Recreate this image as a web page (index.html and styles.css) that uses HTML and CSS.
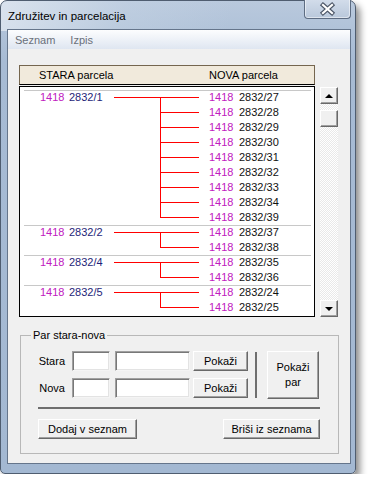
FILE: index.html
```html
<!doctype html>
<html lang="sl">
  <head>
    <meta charset="UTF-8" />
    <title>Združitev in parcelacija</title>
    <link rel="stylesheet" href="styles.css">
  </head>
  <body>
    <div class="window">
      <div class="titlebar">
        <span class="title">Združitev in parcelacija</span>
        <div class="close">
          <svg width="45" height="18" viewBox="0 0 45 18">
            <path d="M18 5 L27 13 M27 5 L18 13" stroke="#4b5566" stroke-width="4.4" stroke-linecap="square" />
            <path d="M18 5 L27 13 M27 5 L18 13" stroke="#ffffff" stroke-width="2.2" stroke-linecap="square" />
          </svg>
        </div>
      </div>

      <div class="client">
        <div class="menubar">
          <span>Seznam</span>
          <span>Izpis</span>
        </div>

        <div class="content">
          <div class="listarea">
            <div class="listcol">
              <div class="listhead">
                <span class="h-old">STARA parcela</span>
                <span>NOVA parcela</span>
              </div>
              <div class="list">
                <div class="group">
                  <div class="row"><div class="old"><span class="lot">1418</span><span class="parc">2832/1</span></div><div class="link first"></div><div class="new"><span class="lot">1418</span><span class="parc">2832/27</span></div></div>
                  <div class="row"><div class="old"></div><div class="link mid"></div><div class="new"><span class="lot">1418</span><span class="parc">2832/28</span></div></div>
                  <div class="row"><div class="old"></div><div class="link mid"></div><div class="new"><span class="lot">1418</span><span class="parc">2832/29</span></div></div>
                  <div class="row"><div class="old"></div><div class="link mid"></div><div class="new"><span class="lot">1418</span><span class="parc">2832/30</span></div></div>
                  <div class="row"><div class="old"></div><div class="link mid"></div><div class="new"><span class="lot">1418</span><span class="parc">2832/31</span></div></div>
                  <div class="row"><div class="old"></div><div class="link mid"></div><div class="new"><span class="lot">1418</span><span class="parc">2832/32</span></div></div>
                  <div class="row"><div class="old"></div><div class="link mid"></div><div class="new"><span class="lot">1418</span><span class="parc">2832/33</span></div></div>
                  <div class="row"><div class="old"></div><div class="link mid"></div><div class="new"><span class="lot">1418</span><span class="parc">2832/34</span></div></div>
                  <div class="row"><div class="old"></div><div class="link last"></div><div class="new"><span class="lot">1418</span><span class="parc">2832/39</span></div></div>
                </div>
                <div class="group">
                  <div class="row"><div class="old"><span class="lot">1418</span><span class="parc">2832/2</span></div><div class="link first"></div><div class="new"><span class="lot">1418</span><span class="parc">2832/37</span></div></div>
                  <div class="row"><div class="old"></div><div class="link last"></div><div class="new"><span class="lot">1418</span><span class="parc">2832/38</span></div></div>
                </div>
                <div class="group">
                  <div class="row"><div class="old"><span class="lot">1418</span><span class="parc">2832/4</span></div><div class="link first"></div><div class="new"><span class="lot">1418</span><span class="parc">2832/35</span></div></div>
                  <div class="row"><div class="old"></div><div class="link last"></div><div class="new"><span class="lot">1418</span><span class="parc">2832/36</span></div></div>
                </div>
                <div class="group">
                  <div class="row"><div class="old"><span class="lot">1418</span><span class="parc">2832/5</span></div><div class="link first"></div><div class="new"><span class="lot">1418</span><span class="parc">2832/24</span></div></div>
                  <div class="row"><div class="old"></div><div class="link last"></div><div class="new"><span class="lot">1418</span><span class="parc">2832/25</span></div></div>
                </div>
              </div>
            </div>

            <div class="scrollbar">
              <div class="sbtn"><span class="arrow-up"></span></div>
              <div class="track short"></div>
              <div class="sbtn thumb"></div>
              <div class="track"></div>
              <div class="sbtn"><span class="arrow-down"></span></div>
            </div>
          </div>

          <fieldset class="pair">
            <legend>Par stara-nova</legend>
            <div class="pair-top">
              <div class="fields">
                <div class="frow">
                  <label>Stara</label>
                  <div class="inp"></div>
                  <div class="inp wide"></div>
                  <button class="btn show">Pokaži</button>
                </div>
                <div class="frow">
                  <label>Nova</label>
                  <div class="inp"></div>
                  <div class="inp wide"></div>
                  <button class="btn show">Pokaži</button>
                </div>
              </div>
              <div class="vsep"></div>
              <button class="btn tall">Pokaži<br>par</button>
            </div>
            <div class="hr"></div>
            <div class="pair-bottom">
              <button class="btn add">Dodaj v seznam</button>
              <button class="btn del">Briši iz seznama</button>
            </div>
          </fieldset>
        </div>
      </div>
    </div>
  </body>
</html>
```

FILE: styles.css
```css
body {
  margin: 0;
  background: #fff;
  font-family: "Liberation Sans", Arial, sans-serif;
  color: #000;
}
.window {
  width: 356px;
  height: 474px;
  box-sizing: border-box;
  border: 1px solid #4f5d70;
  border-radius: 7px 7px 5px 5px;
  padding: 0 4px 9px 6px;
  background:
    linear-gradient(100deg, rgba(226, 233, 242, 0.8) 0%, rgba(200, 214, 230, 0.4) 35%, rgba(169, 188, 212, 0) 65%) 0 0 / 100% 30px no-repeat,
    linear-gradient(#b9c9dd, #a7bbd4 60px, #a3b8d2);
  box-shadow: 4px 5px 7px rgba(0, 0, 0, 0.45);
  display: flex;
  flex-direction: column;
}
.titlebar {
  height: 28px;
  display: flex;
  justify-content: space-between;
  align-items: flex-start;
}
.title {
  margin: 8px 0 0 1px;
  font-size: 11.5px;
  line-height: 14px;
}
.close {
  width: 47px;
  height: 19px;
  margin-top: -1px;
  box-sizing: border-box;
  border: 1px solid #5d6c82;
  border-top: none;
  border-radius: 0 0 4px 4px;
  background: linear-gradient(#d2dcea, #b9c8db);
  box-shadow: inset 1px 0 rgba(255, 255, 255, 0.5), inset -1px -1px rgba(255, 255, 255, 0.5);
  display: flex;
}
.client {
  flex: 1;
  border: 1px solid #65758b;
  background: #f0f0f0;
  display: flex;
  flex-direction: column;
}
.menubar {
  height: 19px;
  background: linear-gradient(#fcfdfe, #dfe6f1);
  display: flex;
  align-items: center;
  gap: 15px;
  padding-left: 7px;
  font-size: 11px;
  color: #6a707a;
}
.content {
  padding: 16px 0 0 11px;
}
.listarea {
  display: flex;
  gap: 5px;
}
.listcol {
  width: 296px;
}
.listhead {
  height: 20px;
  box-sizing: border-box;
  border: 1px solid #75664f;
  border-bottom-color: #000;
  background: #f1eadc;
  display: flex;
  align-items: center;
  padding-left: 19px;
  font-size: 11px;
}
.h-old {
  width: 170px;
}
.list {
  height: 231px;
  margin-top: 1px;
  box-sizing: border-box;
  border: 1px solid #000;
  background: #fff;
  padding: 3px 3px 0 4px;
  overflow: hidden;
  font-size: 11px;
}
.group {
  box-shadow: inset 0 1px #c8c8c8;
}
.row {
  display: flex;
  height: 15px;
  line-height: 15px;
}
.old {
  width: 74px;
  padding-left: 16px;
  display: flex;
}
.new {
  padding-left: 10px;
  display: flex;
}
.lot {
  color: #c020c0;
  width: 29px;
}
.new .lot {
  width: 30px;
}
.old .parc {
  color: #1e1e78;
}
.new .parc {
  color: #111;
}
.link {
  width: 85px;
}
.link.first {
  background:
    linear-gradient(#f00, #f00) 0 7px / 100% 1px no-repeat,
    linear-gradient(#f00, #f00) 46px 7px / 1px 8px no-repeat;
}
.link.mid {
  background:
    linear-gradient(#f00, #f00) 46px 7px / 39px 1px no-repeat,
    linear-gradient(#f00, #f00) 46px 0 / 1px 100% no-repeat;
}
.link.last {
  background:
    linear-gradient(#f00, #f00) 46px 7px / 39px 1px no-repeat,
    linear-gradient(#f00, #f00) 46px 0 / 1px 8px no-repeat;
}
.scrollbar {
  width: 18px;
  height: 230px;
  margin-top: 22px;
  display: flex;
  flex-direction: column;
  background: repeating-conic-gradient(#fff 0 25%, #e9e9e9 0 50%) 0 0 / 2px 2px;
}
.track {
  flex: 1;
}
.track.short {
  flex: 0 0 6px;
}
.sbtn {
  height: 17px;
  box-sizing: border-box;
  background: #f0f0f0;
  border: 1px solid;
  border-color: #fff #696969 #696969 #fff;
  box-shadow: inset -1px -1px #a0a0a0;
  display: flex;
  align-items: center;
  justify-content: center;
}
.arrow-up {
  border-left: 4px solid transparent;
  border-right: 4px solid transparent;
  border-bottom: 4px solid #000;
}
.arrow-down {
  border-left: 4px solid transparent;
  border-right: 4px solid transparent;
  border-top: 4px solid #000;
}
.pair {
  width: 319px;
  box-sizing: border-box;
  margin: 12px 0 0 1px;
  border: 1px solid #b8b8b8;
  padding: 9px 18px 14px 17px;
  font-size: 11px;
  min-width: 0;
}
.pair legend {
  margin-left: -7px;
  padding: 0 2px;
  line-height: 13px;
}
.pair-top {
  display: flex;
  align-items: flex-start;
}
.fields {
  display: flex;
  flex-direction: column;
  gap: 7px;
}
.frow {
  display: flex;
  align-items: center;
  height: 20px;
}
.frow label {
  width: 27px;
  text-align: right;
  margin-right: 7px;
}
.inp {
  width: 38px;
  height: 20px;
  box-sizing: border-box;
  background: #fff;
  border: 1px solid;
  border-color: #a0a0a0 #f4f4f4 #f4f4f4 #a0a0a0;
  box-shadow: inset 1px 1px #787878, inset -1px -1px #e3e3e3;
}
.inp.wide {
  width: 75px;
  margin-left: 5px;
}
.btn {
  height: 20px;
  box-sizing: border-box;
  padding: 0;
  background: #f0f0f0;
  border: 1px solid;
  border-color: #fff #696969 #696969 #fff;
  box-shadow: inset -1px -1px #a0a0a0;
  font-family: "Liberation Sans", Arial, sans-serif;
  font-size: 11px;
  color: #000;
  line-height: 13px;
}
.btn.show {
  width: 55px;
  margin-left: 3px;
}
.vsep {
  width: 2px;
  height: 46px;
  margin: 1px 10px 0 7px;
  background: #6e6e6e;
}
.btn.tall {
  width: 52px;
  height: 48px;
  line-height: 15px;
}
.hr {
  height: 2px;
  margin-top: 8px;
  background: #6e6e6e;
}
.pair-bottom {
  display: flex;
  justify-content: space-between;
  margin-top: 10px;
}
.btn.add {
  width: 99px;
}
.btn.del {
  width: 97px;
}
```
